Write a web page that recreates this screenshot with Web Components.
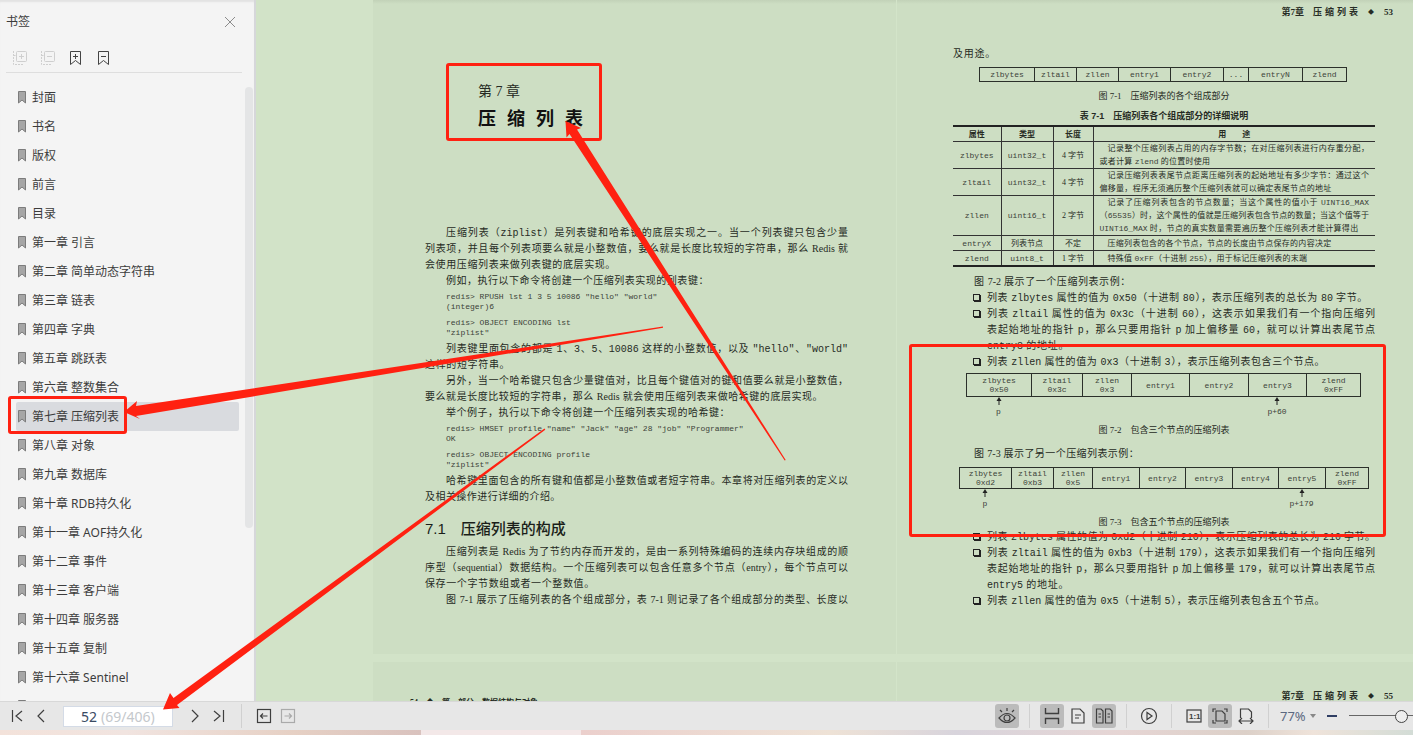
<!DOCTYPE html>
<html lang="zh-CN">
<head>
<meta charset="utf-8">
<title>压缩列表</title>
<style>
html,body{margin:0;height:100%;overflow:hidden}
body{font-family:"Noto Sans","Noto Sans CJK SC",sans-serif;font-size:12px;color:#3c3c3c}
</style>
</head>
<body>
<reader-app></reader-app>

<template id="reader-app">
<style>
:host{display:grid;grid-template-columns:minmax(0,1fr);grid-template-rows:minmax(0,1fr) auto auto;height:100vh;position:relative;overflow:hidden}
main{display:flex;min-height:0}
document-view{flex:1;min-width:0}
.strip{height:5px;display:flex;background:#e5cdc9}
.strip i{flex:0 0 auto;width:421px;background:linear-gradient(90deg,#f3e2da,#f1e4e0 30%,#e6d0c4 70%,#d9c2be)}
.strip b{flex:0 0 auto;width:160px;background:#f3e8e8}
.strip u{flex:1;background:linear-gradient(90deg,#ebcfcc,#eee2d6 30%,#d8d4dc 45%,#e6d5d4 65%,#dcd0c8 80%,#efe3da 88%,#d3dcd6)}
</style>
<main>
<bookmark-panel></bookmark-panel>
<document-view></document-view>
</main>
<status-bar></status-bar>
<div class="strip"><i></i><b></b><u></u></div>
<annotation-layer></annotation-layer>
</template>

<template id="bookmark-panel">
<style>
:host{display:flex;flex-direction:column;box-sizing:border-box;flex:none;width:256px;background:#f4f4f4;border-right:2px solid #d6d7da;overflow:hidden;box-shadow:inset 0 3px 2px -1px #e2e2e2}
header{display:flex;justify-content:space-between;align-items:center;height:44px;padding:0 18px 0 6px;flex:none}
h2{margin:0;font-size:12px;font-weight:400;line-height:20px}
button{all:unset;display:block;line-height:0;cursor:pointer}
.tools{display:flex;gap:12px;height:28px;align-items:center;margin:0 12px 0 6px;padding-left:6px;border-bottom:1px solid #dedede;flex:none}
svg{display:block;fill:none;stroke:#444}
.off svg{stroke:#cfcfcf}
.body{display:flex;flex:1;min-height:0;gap:6px;padding-top:10px}
nav{flex:1;min-width:0;margin-left:16px}
.bar{width:8px;height:441px;margin:4px 1px 0 0;border-radius:4px;background:#e4e5e6}
</style>
<header><h2>书签</h2><button aria-label="关闭"><svg width="12" height="12" style="stroke:#8c8c8c"><path d="M1 1L11 11M11 1L1 11"/></svg></button></header>
<div class="tools">
<button class="off" aria-label="展开"><svg width="16" height="16"><rect x="4.500" y="1.500" width="10" height="10" rx="1"/><path d="M7 6.500h5M9.500 4v5"/><path stroke-dasharray="2 1" d="M1.500 1v13.500h10M1.500 5.500H4"/></svg></button>
<button class="off" aria-label="收起"><svg width="16" height="16"><rect x="4.500" y="1.500" width="10" height="10" rx="1"/><path d="M7 6.500h5"/><path stroke-dasharray="2 1" d="M1.500 1v13.500h10M1.500 5.500H4"/></svg></button>
<button aria-label="添加书签"><svg width="16" height="16"><path d="M2.500 1.500h10v13l-5-4-5 4zM5 6.500h5M7.500 4v5"/></svg></button>
<button aria-label="删除书签"><svg width="16" height="16"><path d="M2.500 1.500h10v13l-5-4-5 4zM5 6.500h5"/></svg></button>
</div>
<div class="body">
<nav aria-label="书签">
<bookmark-item>封面</bookmark-item><bookmark-item>书名</bookmark-item><bookmark-item>版权</bookmark-item><bookmark-item>前言</bookmark-item><bookmark-item>目录</bookmark-item>
<bookmark-item>第一章 引言</bookmark-item><bookmark-item>第二章 简单动态字符串</bookmark-item><bookmark-item>第三章 链表</bookmark-item><bookmark-item>第四章 字典</bookmark-item><bookmark-item>第五章 跳跃表</bookmark-item><bookmark-item>第六章 整数集合</bookmark-item><bookmark-item active>第七章 压缩列表</bookmark-item><bookmark-item>第八章 对象</bookmark-item><bookmark-item>第九章 数据库</bookmark-item><bookmark-item>第十章 RDB持久化</bookmark-item><bookmark-item>第十一章 AOF持久化</bookmark-item><bookmark-item>第十二章 事件</bookmark-item><bookmark-item>第十三章 客户端</bookmark-item><bookmark-item>第十四章 服务器</bookmark-item><bookmark-item>第十五章 复制</bookmark-item><bookmark-item>第十六章 Sentinel</bookmark-item><bookmark-item></bookmark-item>
</nav>
<div class="bar"></div>
</div>
</template>

<template id="bookmark-item">
<style>
:host{display:block;height:29px}
:host([active]){background:#d9dbdf;border-radius:2px}
a{display:flex;align-items:center;gap:6px;height:29px;padding-left:2px;color:inherit;text-decoration:none;white-space:nowrap;line-height:20px}
svg{flex:none}
</style>
<a href="#"><svg width="8" height="13"><path d="M.5.5h7v11.500L4 9 .5 12z" fill="#a6a6a6" stroke="#7c7c7c"/></svg><span><slot></slot></span></a>
</template>

<template id="document-view">
<style>
:host{display:block;overflow:hidden;background:#d2e3c8;color:#262b24;font-family:"Liberation Serif","Noto Sans CJK SC",serif;font-size:10px;line-height:16px}
.spread{display:grid;grid-template-columns:524px 524px;margin-left:117px;margin-bottom:8px;background:#cddec3}
.open{background:linear-gradient(#c2d2b8,#cddec3 4px)}
.left{padding:81px 49px 46px 52px}
.right{padding:4px 46px 0 56px;box-shadow:-1px 0 #d3e4c9}
.no{margin:0 0 0 53px;font-size:14px;line-height:22px;font-weight:400}
h1{margin:0 0 90px 53px;width:105px;font-size:18px;line-height:32px;text-align-last:justify;color:#111}
h2{margin:12px 0 3px;font:500 15px/24px "Liberation Sans","Noto Sans CJK SC",sans-serif;color:#1a1e19;display:flex;gap:15px}
running-head{margin-right:-18px}
.first{margin-top:26px}
m-{font-family:"Liberation Mono","Noto Sans CJK SC",monospace;line-height:10px}
.cap{font-size:9px;line-height:14px;text-align:center;white-space:pre}
.c1{margin-top:7px}.c2{margin-top:4px}
.tt{margin-top:6px;font-weight:700;font-family:"Liberation Sans","Noto Sans CJK SC",sans-serif}
ul{margin:0;padding:0 0 0 34px;list-style:none}
li{position:relative}
li::before{content:"";position:absolute;left:-14px;top:4px;width:5px;height:5px;border:1px solid #222;box-shadow:1px 1px #222}
.d1{margin:5px 28px 0 26px}
.d2{margin:3px 14px 0 13px}
.d3{margin:5px 6px 0 6px}
.i2{margin-top:7px}.i3{margin-top:9px}
.next{height:60px}
.next .left{padding:33px 49px 0 37px;font-size:8px;white-space:pre;font-weight:700}
.next .right{padding-top:26px}
</style>
<div class="spread open">
<article class="left">
<p class="no">第 7 章</p>
<h1>压 缩 列 表</h1>
<book-line indent>压缩列表（<m->ziplist</m->）是列表键和哈希键的底层实现之一。当一个列表键只包含少量</book-line>
<book-line>列表项，并且每个列表项要么就是小整数值，要么就是长度比较短的字符串，那么 Redis 就</book-line>
<book-line fill="45">会使用压缩列表来做列表键的底层实现。</book-line>
<book-line indent fill="67">例如，执行以下命令将创建一个压缩列表实现的列表键：</book-line>
<code-block>redis&gt; RPUSH lst 1 3 5 10086 "hello" "world"
(integer)6</code-block>
<code-block follow>redis&gt; OBJECT ENCODING lst
"ziplist"</code-block>
<book-line indent>列表键里面包含的都是 <m->1</m->、<m->3</m->、<m->5</m->、<m->10086</m-> 这样的小整数值，以及 <m->"hello"</m->、<m->"world"</m-></book-line>
<book-line fill="20">这样的短字符串。</book-line>
<book-line indent>另外，当一个哈希键只包含少量键值对，比且每个键值对的键和值要么就是小整数值，</book-line>
<book-line fill="94">要么就是长度比较短的字符串，那么 Redis 就会使用压缩列表来做哈希键的底层实现。</book-line>
<book-line indent fill="72">举个例子，执行以下命令将创建一个压缩列表实现的哈希键：</book-line>
<code-block>redis&gt; HMSET profile "name" "Jack" "age" 28 "job" "Programmer"
OK</code-block>
<code-block follow>redis&gt; OBJECT ENCODING profile
"ziplist"</code-block>
<book-line indent>哈希键里面包含的所有键和值都是小整数值或者短字符串。本章将对压缩列表的定义以</book-line>
<book-line fill="32">及相关操作进行详细的介绍。</book-line>
<h2><span>7.1</span><span>压缩列表的构成</span></h2>
<book-line indent>压缩列表是 Redis 为了节约内存而开发的，是由一系列特殊编码的连续内存块组成的顺</book-line>
<book-line>序型（sequential）数据结构。一个压缩列表可以包含任意多个节点（entry），每个节点可以</book-line>
<book-line fill="40">保存一个字节数组或者一个整数值。</book-line>
<book-line indent>图 7-1 展示了压缩列表的各个组成部分，表 7-1 则记录了各个组成部分的类型、长度以</book-line>
</article>
<article class="right">
<running-head>53</running-head>
<book-line class="first" fill="10">及用途。</book-line>
<memory-diagram class="d1" height="13" cells="zlbytes:55,zltail:42,zllen:42,entry1:52,entry2:53,...:25,entryN:54,zlend:45"></memory-diagram>
<div class="cap c1">图 7-1　压缩列表的各个组成部分</div>
<div class="cap tt">表 7-1　压缩列表各个组成部分的详细说明</div>
<field-table></field-table>
<book-line class="i2" indent fill="42">图 7-2 展示了一个压缩列表示例：</book-line>
<ul>
<li><book-line fill="98">列表 <m->zlbytes</m-> 属性的值为 <m->0x50</m->（十进制 <m->80</m->），表示压缩列表的总长为 <m->80</m-> 字节。</book-line></li>
<li><book-line>列表 <m->zltail</m-> 属性的值为 <m->0x3c</m->（十进制 <m->60</m->），这表示如果我们有一个指向压缩列</book-line><book-line>表起始地址的指针 <m->p</m->，那么只要用指针 <m->p</m-> 加上偏移量 <m->60</m->，就可以计算出表尾节点</book-line><book-line fill="21"><m->entry3</m-> 的地址。</book-line></li>
<li><book-line fill="87">列表 <m->zllen</m-> 属性的值为 <m->0x3</m->（十进制 <m->3</m->），表示压缩列表包含三个节点。</book-line></li>
</ul>
<memory-diagram class="d2" height="22" cells="zlbytes/0x50:65,zltail/0x3c:51,zllen/0x3:49,entry1:58,entry2:59,entry3:58,zlend/0xFF:55" pointers="1:p,6:p+60"></memory-diagram>
<div class="cap c2">图 7-2　包含三个节点的压缩列表</div>
<book-line class="i3" indent fill="44">图 7-3 展示了另一个压缩列表示例：</book-line>
<memory-diagram class="d3" height="20" cells="zlbytes/0xd2:52,zltail/0xb3:42,zllen/0x5:39,entry1:47,entry2:46,entry3:47,entry4:46,entry5:47,zlend/0xFF:44" pointers="1:p,8:p+179"></memory-diagram>
<div class="cap c2">图 7-3　包含五个节点的压缩列表</div>
<ul>
<li><book-line>列表 <m->zlbytes</m-> 属性的值为 <m->0xd2</m->（十进制 <m->210</m->），表示压缩列表的总长为 <m->210</m-> 字节。</book-line></li>
<li><book-line>列表 <m->zltail</m-> 属性的值为 <m->0xb3</m->（十进制 <m->179</m->），这表示如果我们有一个指向压缩列</book-line><book-line>表起始地址的指针 <m->p</m->，那么只要用指针 <m->p</m-> 加上偏移量 <m->179</m->，就可以计算出表尾节点</book-line><book-line fill="21"><m->entry5</m-> 的地址。</book-line></li>
<li><book-line fill="87">列表 <m->zllen</m-> 属性的值为 <m->0x5</m->（十进制 <m->5</m->），表示压缩列表包含五个节点。</book-line></li>
</ul>
</article>
</div>
<div class="spread next">
<div class="left">54　◆　第一部分　数据结构与对象</div>
<div class="right"><running-head>55</running-head></div>
</div>
</template>

<template id="running-head">
<style>
:host{display:flex;justify-content:flex-end;gap:9px;font-size:9px;line-height:16px;font-weight:700}
.t{width:45px;text-align-last:justify}
.d{width:8px;text-align:center;font-size:6px;font-weight:400}
</style>
<span>第7章</span><span class="t">压 缩 列 表</span><span class="d">◆</span><span><slot></slot></span>
</template>

<template id="book-line">
<style>
:host{display:block;box-sizing:border-box;text-align:justify;text-align-last:justify;white-space:nowrap}
:host([indent]){padding-left:var(--indent,21px)}
</style>
<slot></slot>
</template>

<template id="code-block">
<style>
:host{display:block;margin:3px 0 3px 21px;font:8px/10px "Liberation Mono","Noto Sans CJK SC",monospace;color:#3c4239}
:host([follow]){margin-top:6px}
pre{margin:0;font:inherit}
</style>
<pre><slot></slot></pre>
</template>

<template id="memory-diagram">
<style>
:host{display:block;font:8px/9px "Liberation Mono",monospace;color:#3c4239;text-align:center}
.g{display:grid}
.c{display:grid;align-content:center;border:1px solid #2b302a;border-right:0}
.c:last-child{border-right:1px solid #2b302a}
.p{display:grid;justify-items:center;line-height:14px;white-space:nowrap}
svg{display:block}
</style>
<div class="g cells"></div><div class="g ptrs"></div>
</template>

<template id="field-table">
<style>
:host{display:block;margin-top:2px;font-size:8px;line-height:13px;--indent:8px}
table{width:100%;table-layout:fixed;border-collapse:collapse;border-top:2px solid #222;border-bottom:2px solid #222;line-height:13px}
th,td{padding:0;text-align:center;border-bottom:1px solid #333;border-left:1px solid #333}
th:first-child,td:first-child{border-left:0}
tr:last-child td{border-bottom:0}
th,.s{height:14px}
th{font-family:"Liberation Sans","Noto Sans CJK SC",sans-serif;white-space:pre}
td:last-child{padding:0 6px}
.m,m-{font-family:"Liberation Mono","Noto Sans CJK SC",monospace;color:#3c4239}
m-{line-height:8px}
</style>
<table>
<colgroup><col style="width:48px"><col style="width:52px"><col style="width:40px"><col></colgroup>
<thead><tr><th>属性</th><th>类型</th><th>长度</th><th>用　　途</th></tr></thead>
<tbody>
<tr><td class="m">zlbytes</td><td class="m">uint32_t</td><td>4 字节</td><td><book-line indent>记录整个压缩列表占用的内存字节数；在对压缩列表进行内存重分配，</book-line><book-line fill="41">或者计算 <m->zlend</m-> 的位置时使用</book-line></td></tr>
<tr><td class="m">zltail</td><td class="m">uint32_t</td><td>4 字节</td><td><book-line indent>记录压缩列表表尾节点距离压缩列表的起始地址有多少字节：通过这个</book-line><book-line fill="86">偏移量，程序无须遍历整个压缩列表就可以确定表尾节点的地址</book-line></td></tr>
<tr><td class="m">zllen</td><td class="m">uint16_t</td><td>2 字节</td><td><book-line indent>记录了压缩列表包含的节点数量；当这个属性的值小于 <m->UINT16_MAX</m-></book-line><book-line>（<m->65535</m->）时，这个属性的值就是压缩列表包含节点的数量；当这个值等于</book-line><book-line fill="96"><m->UINT16_MAX</m-> 时，节点的真实数量需要遍历整个压缩列表才能计算得出</book-line></td></tr>
<tr><td class="m s">entryX</td><td>列表节点</td><td>不定</td><td><book-line indent fill="86">压缩列表包含的各个节点，节点的长度由节点保存的内容决定</book-line></td></tr>
<tr><td class="m s">zlend</td><td class="m">uint8_t</td><td>1 字节</td><td><book-line indent fill="77">特殊值 <m->0xFF</m->（十进制 <m->255</m->），用于标记压缩列表的末端</book-line></td></tr>
</tbody>
</table>
</template>

<template id="status-bar">
<style>
:host{display:flex;align-items:center;box-sizing:border-box;height:29px;background:#e7e7e7;border-top:1px solid #d8d8d8;overflow:hidden}
button{all:unset;display:grid;place-items:center;width:24px;height:24px;border-radius:3px;flex:none;cursor:pointer}
button.on{background:#bbb}
svg{display:block;fill:none;stroke:#3f3f3f;stroke-width:1.200}
svg text{fill:#3f3f3f;stroke:none;font:700 8px "Liberation Sans",sans-serif}
.page{display:flex;align-items:center;box-sizing:border-box;width:110px;height:21px;margin:0 10px;background:#fff;border:1px solid #d4dbe6;font-size:14px;line-height:19px}
input.n{all:unset;width:33px;text-align:right;color:#3a4a63}
.page span{color:#c4c8cc;margin-left:4px;white-space:nowrap}
i{width:1px;height:24px;background:#d0d0d0;flex:none}
.sp{flex:1}
select{all:unset;font-size:13px;line-height:20px;width:28px;color:#5b6880}
.caret{border:3px solid transparent;border-top:4px solid #888;border-bottom:0;margin-left:2px}
input.z{appearance:none;flex:none;width:64px;height:14px;margin:0 0 0 5px;background:linear-gradient(#666,#666) 0 6px/100% 1px no-repeat}
input.z::-webkit-slider-thumb{appearance:none;box-sizing:border-box;width:13px;height:13px;border-radius:50%;border:1px solid #444;background:#eee}
.g{display:flex;align-items:center}
</style>
<div class="g" style="padding-left:5px"><button aria-label="首页"><svg width="12" height="14"><path d="M1.500 1v12M11 2L5 7l6 5"/></svg></button><button aria-label="上一页"><svg width="12" height="14"><path d="M9 1L3 7l6 6"/></svg></button></div>
<label class="page"><input class="n" value="52" aria-label="页码"><span>(69/406)</span></label>
<div class="g"><button aria-label="下一页"><svg width="12" height="14"><path d="M3 1l6 6-6 6"/></svg></button><button aria-label="末页"><svg width="12" height="14"><path d="M10.500 1v12M1 2l6 5-6 5"/></svg></button></div>
<i style="margin:0 10px"></i>
<button aria-label="后退"><svg width="16" height="16"><rect x="1.500" y="1.500" width="13" height="13"/><path d="M4.500 8h7M7 5.500L4.500 8 7 10.500"/></svg></button>
<button aria-label="前进"><svg width="16" height="16" style="stroke:#aaa"><rect x="1.500" y="1.500" width="13" height="13"/><path d="M4.500 8h7M9 5.500L11.500 8 9 10.500"/></svg></button>
<span class="sp"></span>
<button class="on" aria-label="护眼模式"><svg width="18" height="18"><path d="M1 11q8-9 16 0q-8 9-16 0zM9 4V1M4 5L2 3M14 5l2-2"/><circle cx="9" cy="11" r="3"/></svg></button>
<i style="margin:0 10px"></i>
<button class="on" aria-label="连续阅读"><svg width="16" height="18"><path d="M1.500 1v5.500h13V1M1.500 17v-5.500h13V17" stroke-width="1.400"/></svg></button>
<button style="margin:0 2px" aria-label="单页"><svg width="14" height="16"><path d="M1 1h8l4 4v10H1zM4 7h6M4 10h4"/></svg></button>
<button class="on" aria-label="双页"><svg width="18" height="16"><path d="M1.500 1h4.500l2 2v12H1.500zM10.500 1H15l2 2v12h-6.500zM3.500 6h2.500M3.500 9h2.500M12.500 6H15M12.500 9H15"/></svg></button>
<i style="margin:0 10px"></i>
<button aria-label="播放"><svg width="18" height="18"><circle cx="9" cy="9" r="7.500"/><path d="M7 5.500v7L12 9z"/></svg></button>
<i style="margin:0 10px"></i>
<button aria-label="实际大小"><svg width="16" height="16"><rect x="1" y="2" width="14" height="12"/><text x="3" y="11">1:1</text></svg></button>
<button class="on" style="margin:0 2px" aria-label="适合页面"><svg width="16" height="16"><path d="M4 3h6l3 3v7H4zM1 4V1h3M12 1h3v3M15 12v3h-3M4 15H1v-3"/></svg></button>
<button aria-label="适合宽度"><svg width="16" height="16"><path d="M2.500 10V1h8l3 3v6M1 13h14M4 10l-3 3 3 3M12 10l3 3-3 3"/></svg></button>
<i style="margin:0 11px 0 10px"></i>
<select aria-label="缩放比例"><option>77%</option></select><span class="caret"></span>
<button style="margin-left:4px" aria-label="缩小"><svg width="12" height="4"><path d="M1 2h10" stroke="#2f3e63" stroke-width="2"/></svg></button>
<input class="z" type="range" min="0" max="100" value="91" aria-label="缩放">
</template>

<template id="annotation-layer">
<style>
:host{display:block;position:absolute;inset:0;pointer-events:none}
svg{display:block;width:100%;height:100%}
rect{fill:none;stroke:#ff2111;stroke-width:3}
polygon{fill:#ff2111}
</style>
<svg aria-hidden="true">
<rect x="447.500" y="64.500" width="153" height="75" rx="1.500"/>
<rect x="9.500" y="397.500" width="116" height="35" rx="1.500"/>
<rect x="910.500" y="345.500" width="474" height="190" rx="1.500"/>
<polygon points="124,412 137,401 136,406 663,326.500 663,327.700 136,416 140,419"/>
<polygon points="163,709.500 170,693 173.500,698 544.500,428.500 545.300,429.700 177,705 179.500,708"/>
<polygon points="565.500,121 581,128 577,129.500 785.700,460 784.700,460.500 569.500,134 566.500,137.500"/>
</svg>
</template>

<script>
class Base extends HTMLElement {
  constructor() {
    super();
    this.attachShadow({ mode: "open" }).append(
      document.getElementById(this.localName).content.cloneNode(true));
  }
}
class BookLine extends Base {
  connectedCallback() {
    const fill = this.getAttribute("fill");
    if (fill) this.style.width = fill + "%";
  }
}
class MemoryDiagram extends Base {
  connectedCallback() {
    const cells = this.getAttribute("cells").split(",").map(c => c.split(":"));
    const columns = cells.map(c => c[1] + "fr").join(" ");
    const row = this.shadowRoot.querySelector(".cells");
    row.style.gridTemplateColumns = columns;
    for (const [label] of cells) {
      const cell = document.createElement("div");
      cell.className = "c";
      cell.style.height = this.getAttribute("height") + "px";
      for (const part of label.split("/")) {
        const line = document.createElement("span");
        line.textContent = part;
        cell.append(line);
      }
      row.append(cell);
    }
    const pointers = this.getAttribute("pointers");
    if (!pointers) return;
    const under = this.shadowRoot.querySelector(".ptrs");
    under.style.gridTemplateColumns = columns;
    for (const item of pointers.split(",")) {
      const [column, label] = item.split(":");
      const p = document.createElement("div");
      p.className = "p";
      p.style.gridColumn = column;
      p.style.gridRow = 1;
      p.innerHTML = '<svg width="6" height="8"><path d="M3 0L5.500 4H.5z" fill="#222"/><path d="M3 3v5" stroke="#222"/></svg><span></span>';
      p.lastChild.textContent = label;
      under.append(p);
    }
  }
}
const special = { "book-line": BookLine, "memory-diagram": MemoryDiagram };
for (const t of document.querySelectorAll("template"))
  customElements.define(t.id, special[t.id] || class extends Base {});
</script>
</body>
</html>
